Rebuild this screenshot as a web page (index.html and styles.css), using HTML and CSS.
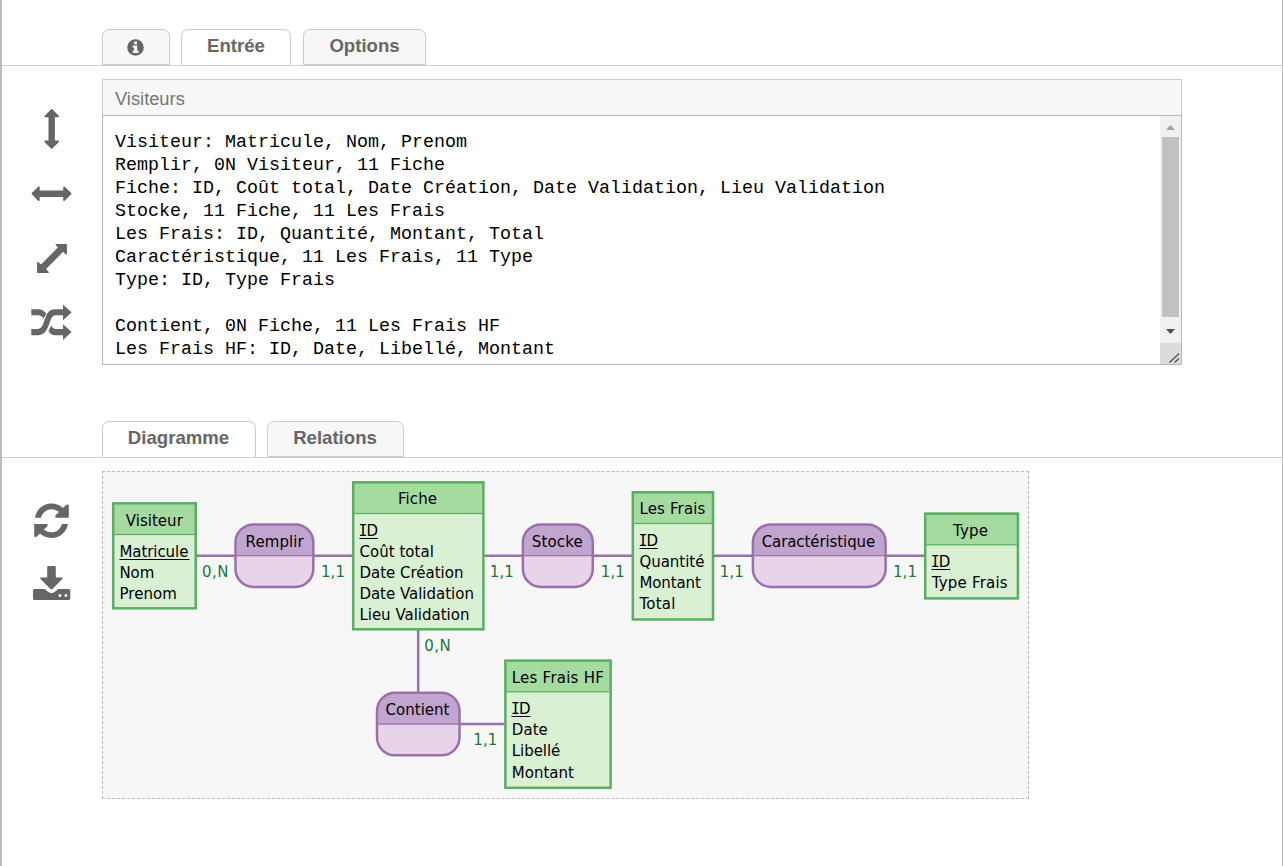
FILE: index.html
```html
<!DOCTYPE html>
<html lang="fr">
<head>
<meta charset="utf-8">
<title>Visiteurs</title>
<link rel="stylesheet" href="styles.css">
</head>
<body>
<div class="page">
  <nav class="tabs">
    <div class="tab tab-info"><svg width="17" height="17" viewBox="0 0 17 17"><circle cx="8.5" cy="8.5" r="8.3" fill="#666"/><path fill="#f7f7f7" d="M7 2.5h3v2.7H7zM5.7 6.5H10.2v5.2h1.3v2.2H5.7v-2.2H7V8.7H5.7z"/></svg></div>
    <div class="tab active tab-input">Entrée</div>
    <div class="tab tab-options">Options</div>
  </nav>
  <section class="panel input-panel">
    <div class="tools">
      <svg width="100" height="270" viewBox="2 90 100 270" fill="#666" stroke="#666" stroke-linejoin="round">
        <path stroke-width="1.8" d="M51.7 109.9L58.1 116.3H54V141.5H58.1L51.7 147.9L45.3 141.5H49.4V116.3H45.3z"/>
        <path stroke-width="1.8" d="M32.4 193.7L38.8 187.3V191.4H64.1V187.3L70.6 193.7L64.1 200.1V196H38.8V200.1z"/>
        <path stroke-width="1.5" d="M66.2 244.8V253.8L63.1 250.8L45.1 268.9L48 272.3H37.8V262.5L41 265.5L59.1 247.4L56.3 244.8z"/>
        <g stroke="none"><path d="M31.3 309.3H38C41.7 309.3 44 310.8 46.3 313.6L43.6 318.4C41.5 316 40.4 315.2 37.5 315.2H31.3z"/><path d="M31.3 329H37.5C46.7 329 42.2 309.3 55 309.3H63V304.6L71.6 312.4L63 320.2V315.3H55.5C48 315.3 51 335.2 38 335.2H31.3z"/><path d="M48.5 331.2L51.1 325.5C52.4 328 53.9 329 56 329H63V324.3L71.6 332.1L63 339.9V335.2H55.2C52.2 335.2 50.3 333.7 48.5 331.2z"/></g>
      </svg>
    </div>
    <div class="editor">
      <div class="title-field">Visiteurs</div>
      <div class="source">
        <pre class="code">Visiteur: Matricule, Nom, Prenom
Remplir, 0N Visiteur, 11 Fiche
Fiche: ID, Coût total, Date Création, Date Validation, Lieu Validation
Stocke, 11 Fiche, 11 Les Frais
Les Frais: ID, Quantité, Montant, Total
Caractéristique, 11 Les Frais, 11 Type
Type: ID, Type Frais

Contient, 0N Fiche, 11 Les Frais HF
Les Frais HF: ID, Date, Libellé, Montant</pre>
        <div class="scrollbar">
          <svg class="arrow" width="21" height="21" viewBox="0 0 21 21"><path fill="#a3a3a3" d="M10.5 9L15 14H6z"/></svg>
          <div class="thumb"></div>
          <svg class="arrow arrow-down" width="21" height="26" viewBox="0 0 21 26"><path fill="#505050" d="M6 12H15L10.5 17z"/></svg>
          <svg class="grip" width="21" height="21" viewBox="0 0 21 21"><path fill="none" stroke="#505050" stroke-width="1.3" d="M9.5 19.5L19 10.5M14.5 19.5L19 15.5"/></svg>
        </div>
      </div>
    </div>
  </section>
  <nav class="tabs tabs-output">
    <div class="tab active tab-diagram">Diagramme</div>
    <div class="tab tab-relations">Relations</div>
  </nav>
  <section class="panel">
    <div class="tools">
      <svg width="100" height="130" viewBox="2 490 100 130" fill="#666">
        <path d="M35 517.8C36.2 509.6 43 503.6 51.5 503.6C56.2 503.6 60.1 505.4 62.8 508L66.3 504.8Q68.8 503.7 68.8 506V517.8H57C54.8 517.8 54.7 516.4 55.9 515.1L59 512.1C56.9 510.3 54.4 509.3 51.4 509.3C46.8 509.3 42.7 512.3 41 517.8z"/>
        <path d="M67.9 523.9C66.7 532 60 538 51.4 538C46.8 538 42.8 536.2 40 533.6L36.6 536.8Q34.2 537.9 34.2 535.6V523.9H45.9C48.1 523.9 48.2 525.2 47 526.5L43.9 529.6C46 531.3 48.5 532.3 51.4 532.3C56.1 532.3 60.2 529.3 61.9 523.9z"/>
        <path d="M48.5 566H54.6Q55.8 566 55.8 567.2V577.4H62.3Q63.3 577.7 62.5 578.8L52.5 589Q51.5 589.7 50.5 589L40.3 578.8Q39.5 577.7 40.5 577.4H47.2V567.2Q47.2 566 48.5 566z"/>
        <path fill-rule="evenodd" d="M34.5 589H44.7L48.3 592.1Q51.5 594.3 54.7 592.1L58.3 589H68.8Q70.3 589 70.3 590.5V598.4Q70.3 600 68.8 600H34.6Q33 600 33 598.4V590.5Q33 589 34.5 589zM61.4 595.5a1.5 1.5 0 1 0-3 0a1.5 1.5 0 1 0 3 0zM67.4 595.5a1.5 1.5 0 1 0-3 0a1.5 1.5 0 1 0 3 0z"/>
      </svg>
    </div>
    <div class="diagram">
      <svg width="925" height="326" viewBox="103 472 925 326">
        <path class="link" d="M196 555.7H235M313 555.7H353M483 555.7H523M593 555.7H633M713 555.7H753M886 555.7H925M418.2 629V693M460 724H505"/>
        <g class="assoc">
          <g transform="translate(235.5 524.4)"><path class="top" d="M0 31.3V18A18 18 0 0 1 18 0H59.8A18 18 0 0 1 77.8 18V31.3z"/><path class="bottom" d="M0 31.3V44.5A18 18 0 0 0 18 62.5H59.8A18 18 0 0 0 77.8 44.5V31.3z"/><path class="rule" d="M0 31.3H77.8"/><rect width="77.8" height="62.5" rx="18"/></g>
          <g transform="translate(522.9 524.4)"><path class="top" d="M0 31.3V18A18 18 0 0 1 18 0H51.9A18 18 0 0 1 69.9 18V31.3z"/><path class="bottom" d="M0 31.3V44.5A18 18 0 0 0 18 62.5H51.9A18 18 0 0 0 69.9 44.5V31.3z"/><path class="rule" d="M0 31.3H69.9"/><rect width="69.9" height="62.5" rx="18"/></g>
          <g transform="translate(752.9 524.4)"><path class="top" d="M0 31.3V18A18 18 0 0 1 18 0H114.7A18 18 0 0 1 132.7 18V31.3z"/><path class="bottom" d="M0 31.3V44.5A18 18 0 0 0 18 62.5H114.7A18 18 0 0 0 132.7 44.5V31.3z"/><path class="rule" d="M0 31.3H132.7"/><rect width="132.7" height="62.5" rx="18"/></g>
          <g transform="translate(377 692.8)"><path class="top" d="M0 31.3V18A18 18 0 0 1 18 0H64.5A18 18 0 0 1 82.5 18V31.3z"/><path class="bottom" d="M0 31.3V44.5A18 18 0 0 0 18 62.5H64.5A18 18 0 0 0 82.5 44.5V31.3z"/><path class="rule" d="M0 31.3H82.5"/><rect width="82.5" height="62.5" rx="18"/></g>
        </g>
        <g class="entity">
          <rect class="body" x="113.2" y="503.3" width="82.5" height="105"/><rect class="head" x="113.2" y="503.3" width="82.5" height="31.2"/><rect class="frame" x="113.2" y="503.3" width="82.5" height="105"/>
          <rect class="body" x="353.2" y="482.3" width="130.2" height="147"/><rect class="head" x="353.2" y="482.3" width="130.2" height="31.2"/><rect class="frame" x="353.2" y="482.3" width="130.2" height="147"/>
          <rect class="body" x="632.8" y="492.3" width="80.2" height="127.2"/><rect class="head" x="632.8" y="492.3" width="80.2" height="31.2"/><rect class="frame" x="632.8" y="492.3" width="80.2" height="127.2"/>
          <rect class="body" x="925.2" y="513.6" width="92.7" height="84.8"/><rect class="head" x="925.2" y="513.6" width="92.7" height="31.2"/><rect class="frame" x="925.2" y="513.6" width="92.7" height="84.8"/>
          <rect class="body" x="505.4" y="660.6" width="105.2" height="127.2"/><rect class="head" x="505.4" y="660.6" width="105.2" height="31.2"/><rect class="frame" x="505.4" y="660.6" width="105.2" height="127.2"/>
        </g>
        <path class="key" d="M119.5 559.5H189.5M359.5 538.5H378M639.5 548.5H658M931.5 569.5H950.3M511.5 716.5H530.5"/>
        <g class="label">
          <text x="125.8" y="526" textLength="57">Visiteur</text>
          <text x="119.4" y="557" textLength="69">Matricule</text>
          <text x="119.4" y="578" textLength="35">Nom</text>
          <text x="119.4" y="599" textLength="57.5">Prenom</text>
          <text x="245.6" y="547" textLength="58">Remplir</text>
          <text x="398" y="504" textLength="39">Fiche</text>
          <text x="358.6" y="536" textLength="19.5"><tspan class="serif-i">I</tspan>D</text>
          <text x="359.4" y="557" textLength="74.5">Coût total</text>
          <text x="359.4" y="578" textLength="104">Date Création</text>
          <text x="359.4" y="599" textLength="114.5">Date Validation</text>
          <text x="359.4" y="620" textLength="110">Lieu Validation</text>
          <text x="531.8" y="547" textLength="51">Stocke</text>
          <text x="639.4" y="514" textLength="66">Les Frais</text>
          <text x="638.6" y="546" textLength="19.5"><tspan class="serif-i">I</tspan>D</text>
          <text x="639.4" y="567" textLength="65">Quantité</text>
          <text x="639.4" y="588" textLength="61.5">Montant</text>
          <text x="639.4" y="609" textLength="36">Total</text>
          <text x="761.7" y="547" textLength="113.5">Caractéristique</text>
          <text x="953" y="536" textLength="35">Type</text>
          <text x="930.8" y="567" textLength="19.5"><tspan class="serif-i">I</tspan>D</text>
          <text x="931.7" y="588" textLength="76">Type Frais</text>
          <text x="385.5" y="715" textLength="64">Contient</text>
          <text x="511.8" y="683" textLength="92">Les Frais HF</text>
          <text x="511" y="714" textLength="19.5"><tspan class="serif-i">I</tspan>D</text>
          <text x="511.8" y="735" textLength="36">Date</text>
          <text x="511.8" y="756" textLength="48.5">Libellé</text>
          <text x="511.8" y="778" textLength="62">Montant</text>
        </g>
        <g class="card">
          <text x="202" y="577" textLength="26.5">0,N</text>
          <text x="321" y="577" textLength="24">1,1</text>
          <text x="489.8" y="577" textLength="24">1,1</text>
          <text x="600.8" y="577" textLength="24">1,1</text>
          <text x="719.8" y="577" textLength="24">1,1</text>
          <text x="893" y="577" textLength="24">1,1</text>
          <text x="424.2" y="651" textLength="26.5">0,N</text>
          <text x="473.3" y="745" textLength="24">1,1</text>
        </g>
      </svg>
    </div>
  </section>
</div>
</body>
</html>
```

FILE: styles.css
```css
* { box-sizing: border-box; }
body { margin: 0; background: #fff; overflow: hidden; font-family: "Liberation Sans", Arial, sans-serif; }
.page { height: 866px; border-left: 2px solid #bbb; border-right: 1px solid #bbb; padding-top: 29px; }
svg { display: block; }
.tabs { display: flex; height: 37px; padding-left: 100px; border-bottom: 1px solid #ccc; }
.tab { height: 36px; border: 1px solid #ccc; border-radius: 7px 7px 0 0; background: #f7f7f7; color: #666; font-weight: bold; font-size: 18.6px; line-height: 32px; text-align: center; }
.tab.active { background: #fff; border-bottom: 0; }
.tab-info { width: 68px; margin-right: 11px; display: flex; justify-content: center; padding: 9px 1px 0 0; }
.tab-input { width: 110px; margin-right: 12px; }
.tab-options { width: 123px; }
.tabs-output { margin-top: 56px; }
.tab-diagram { width: 154px; margin-right: 11px; padding-right: 1px; }
.tab-relations { width: 137px; padding-right: 1px; }
.panel { display: flex; padding-top: 13px; }
.tools { width: 100px; flex: none; }
.input-panel { height: 299px; }
.input-panel .tools { padding-top: 11px; }
.panel:not(.input-panel) .tools { padding-top: 19px; }
.editor { width: 1080px; }
.title-field { height: 36px; border: 1px solid #ccc; border-bottom: 0; background: #f7f7f7; color: #757575; font-size: 18.3px; line-height: 38px; padding-left: 12px; }
.source { display: flex; height: 250px; border: 1px solid #b8b8b8; }
.code { margin: 0; flex: 1; padding: 15px 0 0 12px; color: #000; font-family: "Liberation Mono", monospace; font-size: 18.33px; line-height: 23px; }
.scrollbar { width: 21px; display: flex; flex-direction: column; align-items: center; background: #f1f1f1; }
.thumb { width: 17px; height: 180px; background: #c1c1c1; }
.arrow, .grip { flex: none; }
.grip { background: #dcdcdc; }
.diagram { width: 927px; height: 328px; border: 1px dashed #bbb; background: #f7f7f7; }
.link { stroke: #9970ab; stroke-width: 2.5; fill: none; }
.assoc rect { fill: none; stroke: #9970ab; stroke-width: 2.5; }
.top { fill: #c2a5cf; }
.bottom { fill: #e7d4e8; }
.rule { stroke: #9970ab; stroke-width: 1.2; }
.body { fill: #d9f0d3; }
.head { fill: #a6dba0; stroke: #5aae61; stroke-width: 1.2; }
.frame { fill: none; stroke: #5aae61; stroke-width: 2.5; }
.key { stroke: #000; stroke-width: 1.2; }
.label, .card { font-family: Verdana, "DejaVu Sans", sans-serif; font-size: 15px; }
.serif-i { font-family: "DejaVu Sans Mono", monospace; }
.card { fill: #1b7837; }
```
